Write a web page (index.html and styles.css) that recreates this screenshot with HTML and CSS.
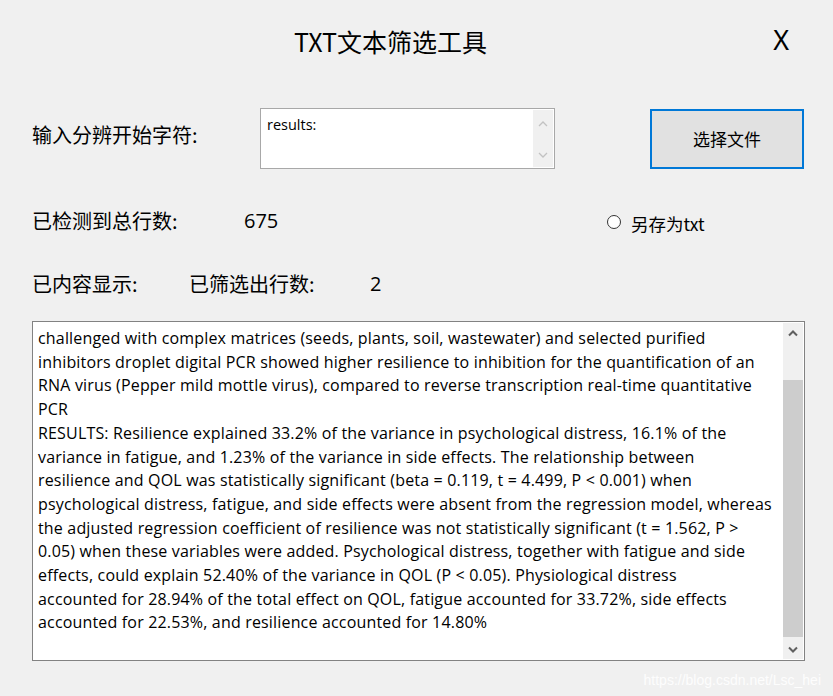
FILE: index.html
```html
<!DOCTYPE html>
<html lang="zh-CN">
<head>
<meta charset="utf-8">
<title>TXT文本筛选工具</title>
<link rel="stylesheet" href="styles.css">
</head>
<body>
<div class="window">
  <div class="header">
    <div class="title">TXT文本筛选工具</div>
    <div class="close">X</div>
  </div>
  <div class="row row-input">
    <div class="label label-start">输入分辨开始字符:</div>
    <div class="inputbox">
      <div class="input-text">results:</div>
      <div class="mini-scroll">
        <svg width="12" height="8" viewBox="0 0 12 8"><path d="M2 6 L6 2 L10 6" fill="none" stroke="#c2c2c2" stroke-width="1.3"/></svg>
        <svg width="12" height="8" viewBox="0 0 12 8"><path d="M2 2 L6 6 L10 2" fill="none" stroke="#c2c2c2" stroke-width="1.3"/></svg>
      </div>
    </div>
    <div class="button">选择文件</div>
  </div>
  <div class="row row-count">
    <div class="label label-total">已检测到总行数:</div>
    <div class="value value-total">675</div>
    <div class="radio">
      <span class="radio-circle"></span>
      <span class="radio-label">另存为txt</span>
    </div>
  </div>
  <div class="row row-show">
    <div class="label label-show">已内容显示:</div>
    <div class="label label-filter">已筛选出行数:</div>
    <div class="value value-filter">2</div>
  </div>
  <div class="textarea">
    <div class="text">
      <div>challenged with complex matrices (seeds, plants, soil, wastewater) and selected purified</div>
      <div>inhibitors droplet digital PCR showed higher resilience to inhibition for the quantification of an</div>
      <div>RNA virus (Pepper mild mottle virus), compared to reverse transcription real-time quantitative</div>
      <div>PCR</div>
      <div>RESULTS: Resilience explained 33.2% of the variance in psychological distress, 16.1% of the</div>
      <div>variance in fatigue, and 1.23% of the variance in side effects. The relationship between</div>
      <div>resilience and QOL was statistically significant (beta = 0.119, t = 4.499, P &lt; 0.001) when</div>
      <div>psychological distress, fatigue, and side effects were absent from the regression model, whereas</div>
      <div>the adjusted regression coefficient of resilience was not statistically significant (t = 1.562, P &gt;</div>
      <div>0.05) when these variables were added. Psychological distress, together with fatigue and side</div>
      <div>effects, could explain 52.40% of the variance in QOL (P &lt; 0.05). Physiological distress</div>
      <div>accounted for 28.94% of the total effect on QOL, fatigue accounted for 33.72%, side effects</div>
      <div>accounted for 22.53%, and resilience accounted for 14.80%</div>
    </div>
    <div class="scrollbar">
      <div class="arrow">
        <svg width="12" height="8" viewBox="0 0 12 8"><path d="M2 6.5 L6 2.5 L10 6.5" fill="none" stroke="#606060" stroke-width="2"/></svg>
      </div>
      <div class="track">
        <div class="thumb"></div>
      </div>
      <div class="arrow">
        <svg width="12" height="8" viewBox="0 0 12 8"><path d="M2 1.5 L6 5.5 L10 1.5" fill="none" stroke="#606060" stroke-width="2"/></svg>
      </div>
    </div>
  </div>
  <div class="watermark">https://blog.csdn.net/Lsc_hei</div>
</div>
</body>
</html>
```
FILE: styles.css
```css
html, body {
  margin: 0;
  padding: 0;
  background: #f0f0f0;
}
.window {
  position: relative;
  width: 833px;
  height: 696px;
  background: #f0f0f0;
  font-family: "Open Sans", "Noto Sans CJK SC", sans-serif;
  color: #000;
  overflow: hidden;
}
.header {
  position: relative;
  height: 82px;
  display: flex;
  justify-content: center;
  align-items: flex-start;
}
.title {
  margin-top: 23px;
  margin-right: 52px;
  font-size: 25px;
  line-height: 36px;
  font-family: "Noto Sans CJK SC", sans-serif;
}
.close {
  position: absolute;
  right: 44px;
  top: 22px;
  font-size: 27px;
  line-height: 36px;
  font-family: "Noto Sans", sans-serif;
}
.row {
  display: flex;
  align-items: center;
}
.label, .value {
  font-size: 20px;
  font-family: "Noto Sans CJK SC", sans-serif;
  line-height: 28px;
}
.value {
  font-family: "Open Sans", sans-serif;
}
.row-input {
  margin-top: 26px;
  height: 61px;
  padding-left: 32px;
}
.label-start {
  width: 228px;
  margin-bottom: 8px;
}
.inputbox {
  width: 293px;
  height: 59px;
  border: 1px solid #a8a8a8;
  background: #fff;
  display: flex;
  box-sizing: content-box;
}
.input-text {
  flex: 1;
  font-size: 14.5px;
  line-height: 20px;
  padding: 6px 0 0 6px;
  font-family: "Open Sans", sans-serif;
}
.mini-scroll {
  width: 20px;
  margin: 1px 1px 1px 0;
  background: #f0f0f0;
  display: flex;
  flex-direction: column;
  justify-content: space-between;
  align-items: center;
  padding: 10px 0 8px;
}
.button {
  margin-left: 95px;
  width: 150px;
  height: 56px;
  border: 2px solid #0078d7;
  background: #e1e1e1;
  display: flex;
  align-items: center;
  justify-content: center;
  font-size: 17px;
  font-family: "Noto Sans CJK SC", sans-serif;
}
.row-count {
  margin-top: 38px;
  padding-left: 32px;
  height: 28px;
}
.label-total {
  width: 212px;
}
.value-total {
  width: 363px;
}
.radio {
  display: flex;
  align-items: center;
  margin-top: 4px;
}
.radio-circle {
  width: 14px;
  height: 14px;
  border: 1px solid #333;
  border-radius: 50%;
  background: #fff;
  box-sizing: border-box;
  margin-right: 10px;
  margin-top: -2px;
}
.radio-label {
  font-size: 17.5px;
  font-family: "Noto Sans CJK SC", sans-serif;
}
.row-show {
  margin-top: 35px;
  padding-left: 32px;
  height: 28px;
}
.label-show {
  width: 157px;
}
.label-filter {
  width: 181px;
}
.textarea {
  margin: 23px 0 0 32px;
  width: 771px;
  height: 338px;
  border: 1px solid #828282;
  background: #fff;
  display: flex;
}
.text {
  flex: 1;
  padding: 5px 0 0 5px;
  font-size: 16px;
  letter-spacing: 0.17px;
  line-height: 23.7px;
  white-space: nowrap;
  font-family: "Open Sans", sans-serif;
}
.scrollbar {
  width: 20px;
  margin: 1px 1px 1px 0;
  background: #f0f0f0;
  display: flex;
  flex-direction: column;
}
.arrow {
  height: 19px;
  display: flex;
  align-items: center;
  justify-content: center;
}
.track {
  flex: 1;
  display: flex;
  flex-direction: column;
}
.thumb {
  margin-top: 38px;
  height: 257px;
  background: #cdcdcd;
}
.watermark {
  position: absolute;
  right: 12px;
  bottom: 8px;
  font-size: 14px;
  color: #fdfdfd;
  font-family: "Liberation Sans", sans-serif;
}
```
